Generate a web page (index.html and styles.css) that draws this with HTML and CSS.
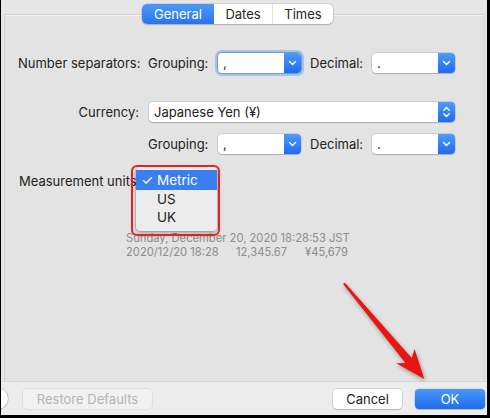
FILE: index.html
```html
<!DOCTYPE html>
<html>
<head>
<meta charset="utf-8">
<link rel="stylesheet" href="styles.css">
</head>
<body>
<div class="frame">
  <div class="window">
    <div class="tabbox">
      <div class="tabs">
        <span class="tab active">General</span><span class="tab">Dates</span><span class="tab last">Times</span>
      </div>
      <div class="content">
        <div class="row r1">
          <span class="lbl">Number separators:</span>
          <span class="sub">Grouping:</span>
          <div class="select focus"><span class="val">,</span><span class="btn"><svg width="9" height="6" viewBox="0 0 9 6"><path d="M1.5 1.5 L4.5 4.5 L7.5 1.5" fill="none" stroke="#fff" stroke-width="1.4" stroke-linecap="round" stroke-linejoin="round"/></svg></span></div>
          <span></span>
          <span class="sub">Decimal:</span>
          <div class="select"><span class="val">.</span><span class="btn"><svg width="9" height="6" viewBox="0 0 9 6"><path d="M1.5 1.5 L4.5 4.5 L7.5 1.5" fill="none" stroke="#fff" stroke-width="1.4" stroke-linecap="round" stroke-linejoin="round"/></svg></span></div>
        </div>
        <div class="row r2">
          <span class="lbl right">Currency:</span>
          <div class="select wide"><span class="val">Japanese Yen (¥)</span><span class="btn"><svg width="9" height="12" viewBox="0 0 9 12"><path d="M1.8 4.2 L4.5 1.6 L7.2 4.2 M1.8 7.8 L4.5 10.4 L7.2 7.8" fill="none" stroke="#fff" stroke-width="1.4" stroke-linecap="round" stroke-linejoin="round"/></svg></span></div>
        </div>
        <div class="row r3">
          <span></span>
          <span class="sub">Grouping:</span>
          <div class="select"><span class="val">,</span><span class="btn"><svg width="9" height="6" viewBox="0 0 9 6"><path d="M1.5 1.5 L4.5 4.5 L7.5 1.5" fill="none" stroke="#fff" stroke-width="1.4" stroke-linecap="round" stroke-linejoin="round"/></svg></span></div>
          <span></span>
          <span class="sub">Decimal:</span>
          <div class="select"><span class="val">.</span><span class="btn"><svg width="9" height="6" viewBox="0 0 9 6"><path d="M1.5 1.5 L4.5 4.5 L7.5 1.5" fill="none" stroke="#fff" stroke-width="1.4" stroke-linecap="round" stroke-linejoin="round"/></svg></span></div>
        </div>
        <div class="row r4">
          <span class="lbl mu">Measurement units</span>
          <div class="popup">
            <div class="item sel"><span class="check">✓</span>Metric</div>
            <div class="item">US</div>
            <div class="item">UK</div>
          </div>
          <div class="highlight"></div>
        </div>
        <div class="info">
          <div class="line">Sunday, December 20, 2020 18:28:53 JST</div>
          <div class="line"><span class="c1">2020/12/20 18:28</span><span class="c2">12,345.67</span><span>¥45,679</span></div>
        </div>
      </div>
    </div>
    <div class="bottombar">
      <span class="help">?</span>
      <span class="button disabled">Restore Defaults</span>
      <span class="spacer"></span>
      <span class="button cancel">Cancel</span>
      <span class="button ok">OK</span>
    </div>
    <svg class="arrow" width="486" height="415" viewBox="0 0 486 415">
      <polygon points="342.6,283.4 343.9,282.8 410.7,357.9 413.6,348.9 423.3,379 395.2,363.3 404.5,362.9 342.4,284.6" fill="#ea1410"/>
    </svg>
  </div>
</div>
</body>
</html>
```

FILE: styles.css
```css
* { box-sizing: border-box; }
html, body { margin: 0; padding: 0; }
body { background: #000; font-family: Inter, "Noto Sans", sans-serif; font-size: 13px; color: #222; }

.frame {
  width: 490px;
  height: 418px;
  background: #000;
  padding: 0 3px 3px 1px;
  display: flex;
}
.window {
  position: relative;
  flex: 1;
  background: #e6e6e6;
  display: flex;
  flex-direction: column;
  overflow: hidden;
}

.tabbox {
  flex: 1;
  margin: 14px 2px 0 3px;
  border: 1px solid #d4d4d4;
  border-bottom: none;
  background: #e3e3e3;
  box-shadow: inset 0 1px 0 #f0f0f0;
  display: flex;
  flex-direction: column;
}
.tabs {
  align-self: flex-start;
  margin-top: -11px;
  margin-left: 137px;
  display: flex;
  height: 20px;
  background: #fff;
  border-radius: 5px;
  box-shadow: 0 0 0 0.5px rgba(0,0,0,0.18), 0 1px 1.5px rgba(0,0,0,0.15);
}
.tab {
  height: 20px;
  line-height: 20px;
  text-align: center;
  color: #262626;
}
.tab:nth-child(1) { width: 72px; }
.tab:nth-child(2) { width: 59px; border-right: 1px solid #e2e2e2; }
.tab:nth-child(3) { width: 60px; }
.tab.active {
  background: linear-gradient(#4c99f9, #2a74ee);
  color: #fff;
  border-radius: 5px 0 0 5px;
}

.content {
  padding: 29px 0 0 13px;
}
.row {
  display: grid;
  grid-template-columns: 130px 70px 83px 9px 62px 83px;
  height: 20px;
  align-items: center;
}
.r2 { margin-top: 29px; }
.r3 { margin-top: 12px; }
.r4 { margin-top: 17px; position: relative; }

.lbl { white-space: nowrap; }
.lbl.right { text-align: right; padding-right: 9px; }
.lbl.mu { padding-left: 1px; }
.sub { white-space: nowrap; }

.select {
  position: relative;
  height: 20px;
  background: #fff;
  border-radius: 4px;
  box-shadow: 0 0 0 0.5px rgba(0,0,0,0.2), 0 1px 1px rgba(0,0,0,0.15);
  display: flex;
  align-items: center;
}
.select.focus {
  box-shadow: 0 0 0 1px rgba(70,130,220,0.6), 0 0 0 3px rgba(120,165,235,0.55);
}
.select.wide { grid-column: 2 / 7; margin-left: 1px; }
.val { flex: 1; padding-left: 5px; white-space: nowrap; color: #222; }
.btn {
  width: 17px;
  height: 20px;
  border-radius: 0 4px 4px 0;
  background: linear-gradient(#4e9bfa, #1f6bee);
  display: flex;
  align-items: center;
  justify-content: center;
}

.popup {
  position: absolute;
  left: 118px;
  top: -4px;
  width: 81px;
  height: 64px;
  background: #ececec;
  border-radius: 4px;
  box-shadow: 0 0 0 0.5px rgba(0,0,0,0.2), 0 3px 6px rgba(0,0,0,0.25);
  padding-top: 3px;
}
.item {
  height: 18px;
  line-height: 18px;
  padding-left: 21px;
  position: relative;
  color: #222;
  font-size: 13.5px;
}
.item.sel {
  background: #3a7ef1;
  color: #fff;
  height: 20px;
  line-height: 20px;
}
.check {
  position: absolute;
  left: 5px;
  top: 0;
  font-size: 14px;
}
.highlight {
  position: absolute;
  left: 113px;
  top: -6px;
  width: 89px;
  height: 71px;
  border: 2px solid #e3232b;
  border-radius: 6px;
}

.info {
  margin-top: 40px;
  padding-left: 108px;
  color: #8c8c8c;
  font-size: 11.2px;
}
.line { height: 14px; line-height: 14px; white-space: nowrap; display: flex; }
.c1 { width: 110px; }
.c2 { width: 69px; }

.bottombar {
  height: 34px;
  background: #ececec;
  border-top: 1px solid #d6d6d6;
  display: flex;
  align-items: center;
  padding-right: 2px;
}
.help {
  width: 21px;
  height: 21px;
  margin-left: -14px;
  border-radius: 50%;
  background: #fff;
  box-shadow: 0 0 0 0.5px rgba(0,0,0,0.25), 0 1px 1px rgba(0,0,0,0.15);
  display: flex;
  align-items: center;
  justify-content: center;
  font-weight: 600;
  color: #333;
}
.button {
  height: 20px;
  line-height: 20px;
  border-radius: 4px;
  text-align: center;
  white-space: nowrap;
}
.disabled {
  margin-left: 15px;
  width: 129px;
  background: #f1f1f1;
  color: #b4b4b4;
  box-shadow: 0 0 0 0.5px rgba(0,0,0,0.12);
}
.spacer { flex: 1; }
.cancel {
  width: 69px;
  background: #fff;
  color: #222;
  box-shadow: 0 0 0 0.5px rgba(0,0,0,0.2), 0 1px 1px rgba(0,0,0,0.15);
}
.ok {
  width: 70px;
  margin-left: 13px;
  background: linear-gradient(#4a96fa, #1d6cef);
  color: #fff;
  box-shadow: 0 0 0 0.5px rgba(0,0,0,0.15), 0 1px 1px rgba(0,0,0,0.15);
}

.arrow {
  position: absolute;
  left: 0;
  top: 0;
  pointer-events: none;
  filter: drop-shadow(1px 2px 2px rgba(0,0,0,0.35));
}
```
